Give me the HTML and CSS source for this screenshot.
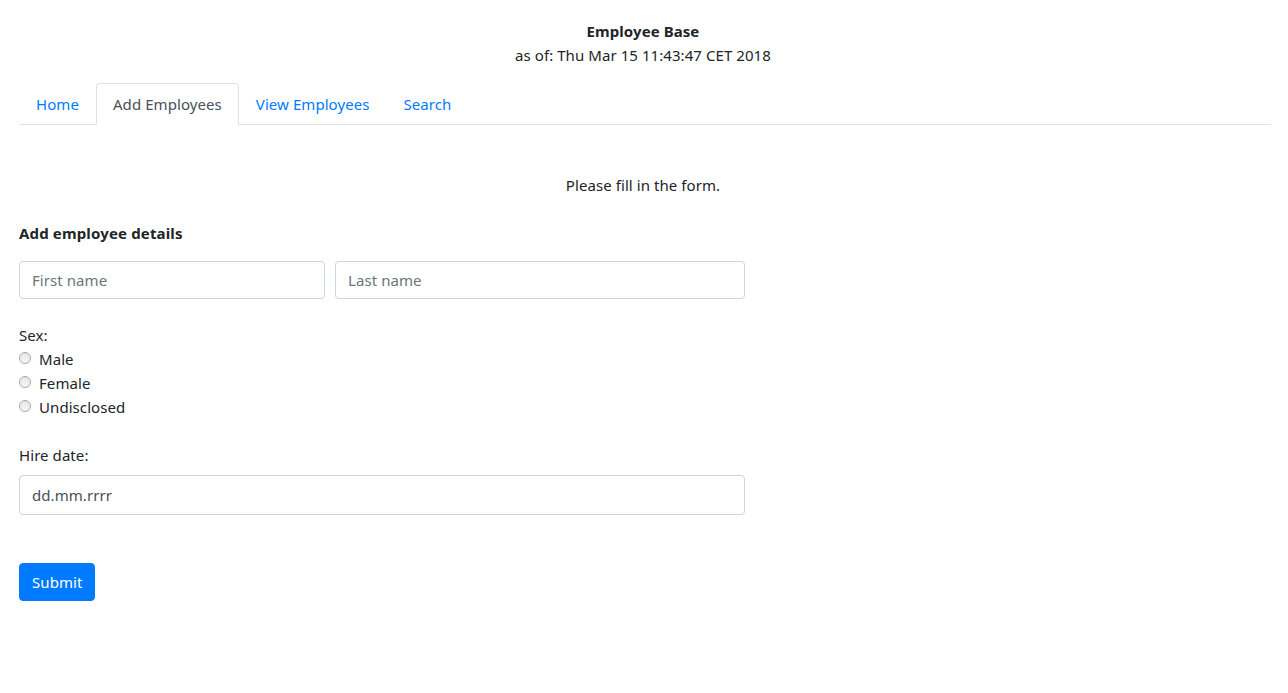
FILE: index.html
```html
<!DOCTYPE html>
<html lang="en">
<head>
<meta charset="utf-8">
<title>Employee Base</title>
<link rel="stylesheet" href="styles.css">
</head>
<body>
<div class="page">
  <header class="header">
    <div class="title">Employee Base</div>
    <div class="subtitle">as of: Thu Mar 15 11:43:47 CET 2018</div>
  </header>
  <nav class="tabs">
    <a class="tab" href="#">Home</a>
    <a class="tab active" href="#">Add Employees</a>
    <a class="tab" href="#">View Employees</a>
    <a class="tab" href="#">Search</a>
  </nav>
  <p class="notice">Please fill in the form.</p>
  <form class="form">
    <h2 class="form-title">Add employee details</h2>
    <div class="name-row">
      <input class="field first" type="text" placeholder="First name">
      <input class="field last" type="text" placeholder="Last name">
    </div>
    <div class="group">
      <div class="label">Sex:</div>
      <label class="radio"><input type="radio" name="sex"><span>Male</span></label>
      <label class="radio"><input type="radio" name="sex"><span>Female</span></label>
      <label class="radio"><input type="radio" name="sex"><span>Undisclosed</span></label>
    </div>
    <div class="group">
      <div class="label hire">Hire date:</div>
      <input class="field date" type="text" placeholder="dd.mm.rrrr">
    </div>
    <button class="btn" type="button">Submit</button>
  </form>
</div>
</body>
</html>
```
FILE: styles.css
```css
* { box-sizing: border-box; }
html, body { margin: 0; background: #fff; }
body {
  font-family: "Noto Sans", "Open Sans", sans-serif;
  font-size: 16px;
  line-height: 24px;
  color: #212529;
  letter-spacing: 0.07px;
}
.page { padding: 19px 17px 0 19px; }
.header { text-align: center; padding-right: 4px; }
.title { font-weight: 700; font-size: 15px; }
.subtitle { font-size: 15px; }
.tabs {
  display: flex;
  margin-top: 16px;
  border-bottom: 1px solid #dee2e6;
}
.tab {
  display: block;
  padding: 8px 16px;
  border: 1px solid transparent;
  border-top-left-radius: 4px;
  border-top-right-radius: 4px;
  margin-bottom: -1px;
  color: #007bff;
  text-decoration: none;
  font-size: 15px;
}
.tab.active {
  color: #495057;
  background: #fff;
  border-color: #dee2e6 #dee2e6 #fff;
}
.notice {
  margin: 48px 0 0;
  padding-right: 4px;
  text-align: center;
  font-size: 15px;
}
.form { width: 726px; margin-top: 24px; }
.form-title { margin: 0; font-size: 15px; font-weight: 700; line-height: 24px; letter-spacing: 0.15px; }
.name-row { display: flex; gap: 10px; margin-top: 16px; }
.field {
  display: block;
  height: 38px;
  padding: 6px 12px;
  font: inherit;
  font-size: 15px;
  letter-spacing: 0.07px;
  color: #495057;
  border: 1px solid #ced4da;
  border-radius: 4px;
  background: #fff;
  outline: none;
}
.field::placeholder { color: #6c757d; }
.first { width: 306px; }
.last { width: 410px; }
.group { margin-top: 24px; }
.label { font-size: 15px; }
.radio { display: flex; align-items: center; gap: 8px; font-size: 15px; height: 24px; }
.radio input {
  appearance: none;
  -webkit-appearance: none;
  width: 12px;
  height: 12px;
  margin: -2px 0 0 0;
  border-radius: 50%;
  border: 1px solid #a6a6a6;
  background: linear-gradient(#e6e6e6, #f7f7f7);
  flex: none;
}
.date { width: 100%; height: 40px; margin-top: 8px; }
.date::placeholder { color: #495057; }
.btn {
  display: block;
  margin-top: 48px;
  height: 38px;
  padding: 6px 12px;
  font: inherit;
  font-size: 15px;
  letter-spacing: 0.07px;
  color: #fff;
  background: #007bff;
  border: 1px solid #007bff;
  border-radius: 4px;
  width: 76px;
}
```
